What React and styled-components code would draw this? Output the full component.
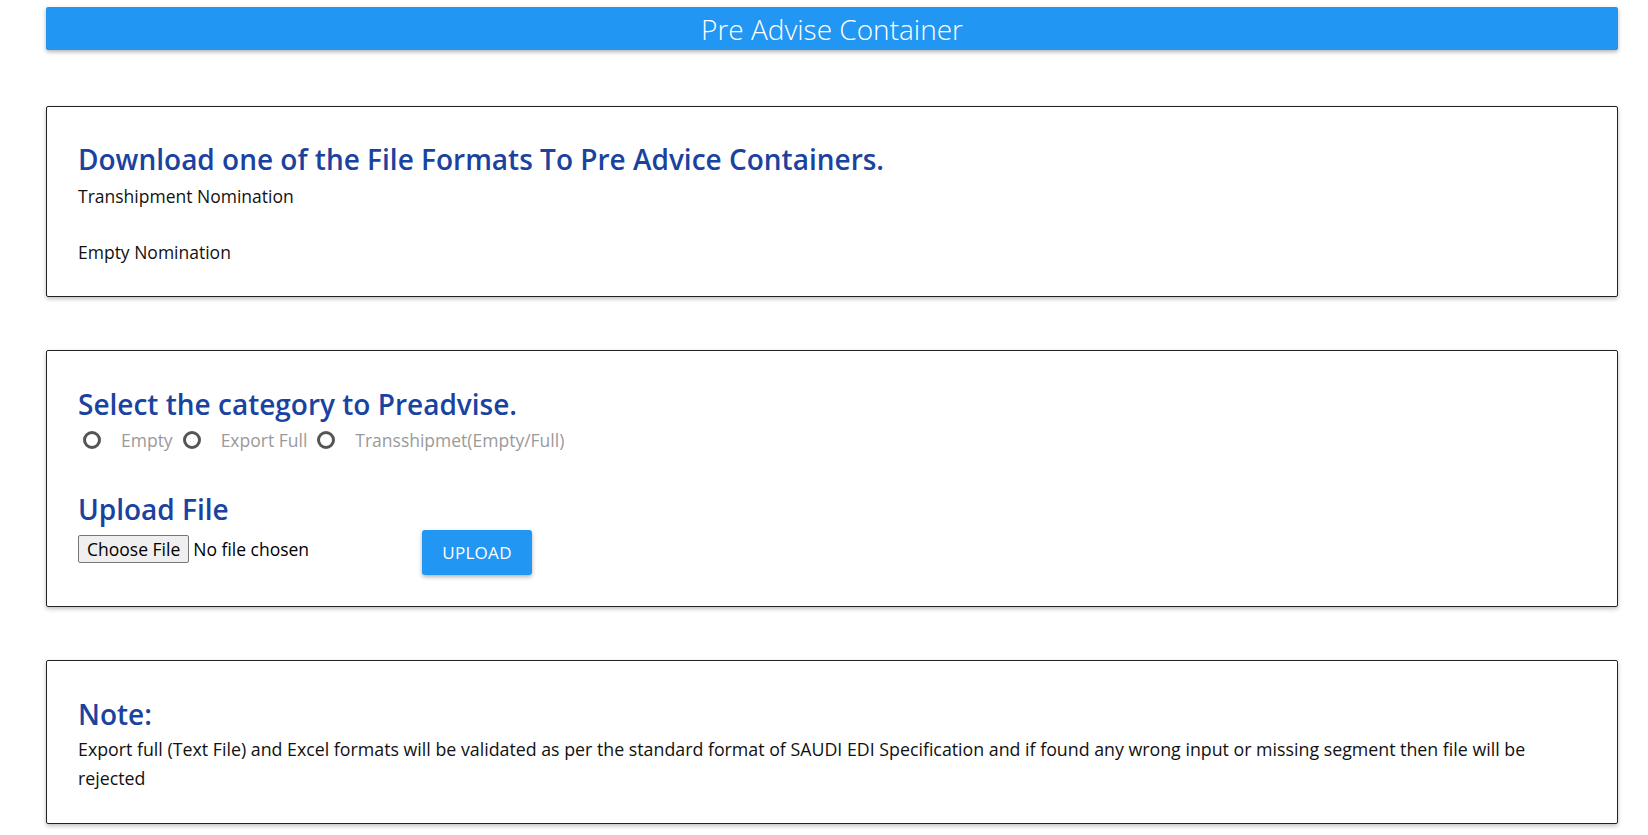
import React from 'react';
import styled, { createGlobalStyle } from 'styled-components';

const GlobalStyle = createGlobalStyle`
    body {
        margin: 0;
        background: #ffffff;
        font-family: "Open Sans", "Noto Sans", sans-serif;
    }
`;

const Page = styled.div`
    display: flex;
    flex-direction: column;
    gap: 53px;
    padding: 7px 30px 12px 46px;
`;

const TitleBar = styled.header`
    display: flex;
    align-items: center;
    justify-content: center;
    height: 43px;
    margin-bottom: 3px;
    background-color: #2196f3;
    border-radius: 2px;
    box-shadow: 0 2px 4px rgba(0, 0, 0, 0.3);
    color: #ffffff;
    font-size: 28px;
    font-weight: 300;
`;

const Card = styled.section`
    display: flex;
    flex-direction: column;
    align-items: flex-start;
    padding: ${(p) => p.$pad || '32px 32px 30px 31px'};
    border: 1px solid #222222;
    border-radius: 2px;
    box-shadow: 0 2px 4px rgba(0, 0, 0, 0.25);
`;

const Heading = styled.h2`
    margin: ${(p) => p.$mt || '0'} 0 0 0;
    color: #1a43a0;
    font-size: 28px;
    font-weight: 600;
    line-height: 40px;
`;

const Text = styled.div`
    max-width: 1480px;
    margin-top: ${(p) => p.$mt || '0'};
    color: #111111;
    font-size: ${(p) => p.$size || '17.5px'};
    line-height: 28.5px;
`;

const RadioRow = styled.div`
    display: flex;
    align-items: center;
    height: 30px;
    margin-top: 1px;
    padding-left: 5px;
`;

const RadioItem = styled.label`
    display: flex;
    align-items: center;
    gap: 20px;
    margin-right: 10px;
    color: #9a9a9a;
    font-size: 17.5px;
    cursor: pointer;
`;

const RadioCircle = styled.span`
    width: 12px;
    height: 12px;
    border: 3px solid #555555;
    border-radius: 50%;
`;

const UploadRow = styled.div`
    display: flex;
    align-items: flex-start;
    margin-top: 1px;
`;

const FileField = styled.div`
    display: flex;
    align-items: center;
    gap: 4px;
    width: 344px;
    margin-top: 5px;
    color: #000000;
    font-size: 17.5px;
`;

const ChooseButton = styled.button`
    height: 28px;
    padding: 0 8px;
    border: 1px solid #767676;
    border-radius: 2px;
    background: #efefef;
    color: #000000;
    font-family: inherit;
    font-size: 17.5px;
`;

const UploadButton = styled.button`
    width: 110px;
    height: 45px;
    border: none;
    border-radius: 3px;
    background-color: #2196f3;
    box-shadow: 0 2px 4px rgba(0, 0, 0, 0.3);
    color: #ffffff;
    font-family: inherit;
    font-size: 17px;
    letter-spacing: 0.3px;
`;

const categories = ['Empty', 'Export Full', 'Transshipmet(Empty/Full)'];

export default function App() {
    return (
        <>
            <GlobalStyle />
            <Page>
                <TitleBar>Pre Advise Container</TitleBar>

                <Card>
                    <Heading>Download one of the File Formats To Pre Advice Containers.</Heading>
                    <Text $mt="3px">Transhipment Nomination</Text>
                    <Text $mt="27px">Empty Nomination</Text>
                </Card>

                <Card $pad="33px 32px 31px 31px">
                    <Heading>Select the category to Preadvise.</Heading>
                    <RadioRow>
                        {categories.map((c) => (
                            <RadioItem key={c}>
                                <RadioCircle />
                                {c}
                            </RadioItem>
                        ))}
                    </RadioRow>
                    <Heading $mt="34px">Upload File</Heading>
                    <UploadRow>
                        <FileField>
                            <ChooseButton>Choose File</ChooseButton>
                            No file chosen
                        </FileField>
                        <UploadButton>UPLOAD</UploadButton>
                    </UploadRow>
                </Card>

                <Card $pad="33px 32px 31px 31px">
                    <Heading>Note:</Heading>
                    <Text $size="17.8px" $mt="1px">
                        Export full (Text File) and Excel formats will be validated as per the standard format of SAUDI EDI Specification and if found any wrong input or missing segment then file will be rejected
                    </Text>
                </Card>
            </Page>
        </>
    );
}
